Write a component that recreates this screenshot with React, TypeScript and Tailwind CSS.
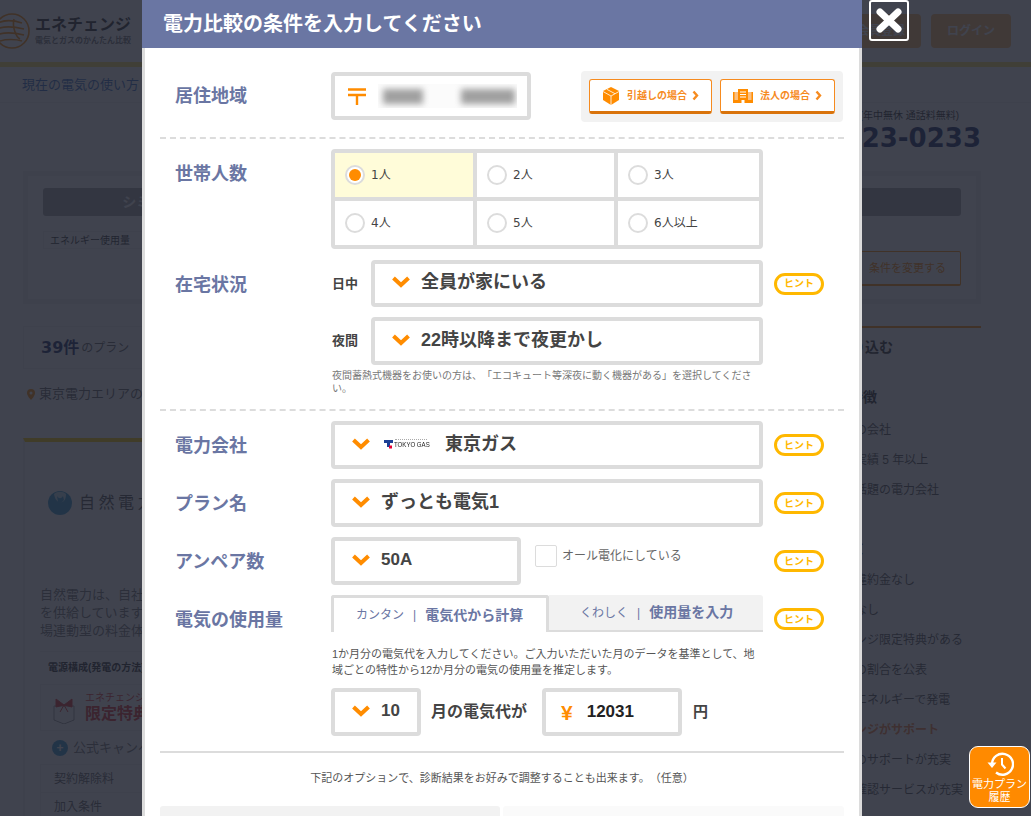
import type { ReactNode } from "react";

function Chevron() {
  return (
    <svg width="18" height="12" viewBox="0 0 18 12" className="-mt-px shrink-0">
      <polyline points="1.5,2 9,9 16.5,2" fill="none" stroke="#ff8c00" strokeWidth="4" />
    </svg>
  );
}

function SmallChevron() {
  return (
    <svg width="7" height="11" viewBox="0 0 7 11" className="shrink-0">
      <polyline points="1.5,1.5 5,5.5 1.5,9.5" fill="none" stroke="#f68b1f" strokeWidth="2.4" />
    </svg>
  );
}

function Label({ children }: { children: ReactNode }) {
  return <div className="w-[171px] shrink-0 pt-[2px] pl-[15px] text-[18px] leading-6 font-bold text-[#6a76a3]">{children}</div>;
}

function Hint({ className = "" }: { className?: string }) {
  return (
    <div className={`ml-[11px] flex h-[22px] w-[50px] shrink-0 items-center justify-center rounded-full border-[3px] border-[#ffb800] text-[10px] font-bold text-[#ffb800] ${className}`}>
      ヒント
    </div>
  );
}

function Select({ width, height = "h-12", children }: { width: string; height?: string; children: ReactNode }) {
  return (
    <div className={`flex ${width} ${height} shrink-0 items-center rounded-[4px] border-4 border-[#dcdcdc] bg-white pb-[2px] pl-[17px] text-[18px] font-bold text-[#444]`}>
      <Chevron />
      {children}
    </div>
  );
}

function Radio({ text, checked = false }: { text: string; checked?: boolean }) {
  return (
    <div className={`flex items-center pl-[10px] text-[12px] text-[#444] font-['DejaVu_Sans','Noto_Sans_CJK_JP',sans-serif] ${checked ? "bg-[#fffcd9]" : "bg-white"}`}>
      <span className="mr-[6px] flex h-5 w-5 items-center justify-center rounded-full border-2 border-[#dcdcdc] bg-white">
        {checked && <span className="h-3 w-3 rounded-full bg-[#ff8c00]" />}
      </span>
      {text}
    </div>
  );
}

function TokyoGasLogo() {
  return (
    <div className="ml-[14px] flex h-[10px] w-[45px] shrink-0 items-end">
      <svg width="9" height="9" viewBox="0 0 9 9" className="shrink-0">
        <polygon points="0,0 9,0 9,3 6,3 6,7 3,7 3,3 0,3" fill="#1c3f94" />
        <rect x="5" y="5.5" width="3" height="3" fill="#e60033" />
      </svg>
      <span className="relative ml-[1px] block w-[35px]">
        <span className="absolute -top-[2px] left-[1px] h-px w-[32px] border-t border-dotted border-[#aaa]" />
        <span className="block origin-left scale-x-[0.76] whitespace-nowrap text-[8px] leading-[8px] font-normal text-[#222] font-['Liberation_Sans',sans-serif]">TOKYO GAS</span>
      </span>
    </div>
  );
}

function SideItem({ children, accent = false }: { children: ReactNode; accent?: boolean }) {
  return <div className={`h-[30px] whitespace-nowrap text-[12px] leading-[30px] ${accent ? "font-bold text-[#f08040]" : "text-[#555]"}`}>{children}</div>;
}

function Background() {
  return (
    <div className="text-[#333]">
      {/* header */}
      <div className="flex h-[62px] items-center justify-between bg-white pr-5">
        <div className="flex items-center">
          <svg width="31" height="38" viewBox="0 0 31 38" className="mt-[2px] shrink-0">
            <g fill="none" stroke="#ff8c00" strokeWidth="1.6">
              <circle cx="12" cy="18" r="17" />
              <path d="M-2 10 C6 6 16 8 22 10 M-3 16 C6 12 16 14 24 16 M-3 22 C6 18 16 20 24 22 M0 28 C6 26 16 26 22 28" />
              <path d="M14 6 C12 14 16 24 20 26" />
            </g>
          </svg>
          <div className="ml-1">
            <div className="text-[16px] leading-5 font-bold">エネチェンジ</div>
            <div className="text-[8px] leading-3 font-bold text-[#777]">電気とガスのかんたん比較</div>
          </div>
        </div>
        <div className="flex gap-[10px]">
          <div className="flex h-[34px] w-20 items-center justify-center rounded-[4px] bg-[#ffb866] text-[12px] font-bold text-white">会員登録</div>
          <div className="flex h-[34px] w-20 items-center justify-center rounded-[4px] bg-[#ffb866] text-[12px] font-bold text-white">ログイン</div>
        </div>
      </div>
      <div className="h-[5px] bg-[#ffe066]" />
      <div className="flex h-[36px] items-center border-b border-[#eee] pl-[22px] text-[13px] text-[#3a6fc4]">現在の電気の使い方</div>

      {/* phone */}
      <div className="mr-[50px] flex h-[68px] flex-col items-end pt-[6px]">
        <div className="pr-[22px] text-[10px] leading-[14px]">電話受付 (年中無休 通話料無料)</div>
        <div className="-mt-[2px] text-[26px] leading-[34px] font-bold text-[#1a2a66] font-['DejaVu_Sans',sans-serif]">0120-123-0233</div>
      </div>

      {/* search summary card */}
      <div className="mx-[23px] mr-[50px] h-[133px] border-[5px] border-[#f2f2f2] bg-white px-[15px] pt-3">
        <div className="flex h-7 items-center justify-center rounded-[3px] bg-[#a8a8a8] pr-[648px] text-[14px] font-bold whitespace-nowrap text-white">シミュレーション</div>
        <div className="mt-[15px] flex h-[18px] w-[200px] items-center border border-[#eee] pl-[6px] text-[10px]">エネルギー使用量</div>
        <div className="mt-[2px] flex justify-end">
          <div className="flex h-[35px] w-[120px] items-center justify-end rounded-[2px] border border-b-2 border-[#ff8c00] pr-[14px] text-[11px] text-[#ff8c00]">条件を変更する</div>
        </div>
      </div>

      <div className="mt-[22px] mr-[50px] ml-[23px] flex">
        {/* plan list */}
        <div className="w-[750px] shrink-0">
          <div className="flex h-[43px] items-center border border-[#eee] pl-[17px]">
            <span className="text-[16px] font-bold font-['DejaVu_Sans','Noto_Sans_CJK_JP',sans-serif] text-[#1a2a66]">39件</span>
            <span className="ml-[2px] text-[12px] text-[#666]">のプラン</span>
          </div>
          <div className="mt-[16px] flex h-[18px] items-center pl-1 text-[13px] text-[#666]">
            <svg width="8" height="11" viewBox="0 0 8 11" className="mr-[4px]">
              <path d="M4 0a4 4 0 0 1 4 4c0 3-4 7-4 7S0 7 0 4a4 4 0 0 1 4-4z" fill="#ff8c00" />
              <circle cx="4" cy="4" r="1.5" fill="#fff" />
            </svg>
            東京電力エリアのプラン
          </div>
          <div className="mt-[35px] h-[400px] border-x-2 border-t-4 border-x-[#f2f2f2] border-t-[#ffd200] px-[15px]">
            <div className="mt-[49px] flex items-center pl-2">
              <svg width="24" height="24" viewBox="0 0 24 24" className="shrink-0">
                <circle cx="12" cy="12" r="12" fill="#3a9bd0" />
                <path d="M6 3c1 6 4 9 8 8 3-1 4-4 4-8-3-3-9-3-12 0z" fill="#bfe3f2" />
                <path d="M9 5c2 3 4 3 6 0l1 4-3 3-3-1z" fill="#3a9bd0" />
              </svg>
              <span className="ml-[7px] text-[16px] tracking-[3.5px] text-[#555]">自然電力</span>
            </div>
            <div className="mt-[71px] text-[13px] leading-[18px] text-[#777]">
              <div>自然電力は、自社グループ</div>
              <div>を供給しています。</div>
              <div>場連動型の料金体系</div>
            </div>
            <div className="mt-[11px] border-t border-[#eee] pt-2 pl-2 text-[10px] font-bold">電源構成(発電の方法)</div>
            <div className="mt-[9px] flex h-[47px] items-center border border-[#f2f2f2] pl-[10px]">
              <svg width="26" height="32" viewBox="0 0 26 32" fill="none" stroke="#d33" strokeWidth="1">
                <path d="M3 14h20v14l-10 4-10-4z" stroke="#999" />
                <path d="M13 13 5 7v8zM13 13l8-6v8zM13 13l-4 7M13 13l4 7" fill="#d33" />
              </svg>
              <div className="ml-2">
                <div className="text-[10px] leading-3 text-[#d33]">エネチェンジ</div>
                <div className="text-[16px] leading-5 font-bold text-[#d33]">限定特典</div>
              </div>
            </div>
            <div className="mt-[5px] flex h-6 items-center pl-[12px] text-[13px] text-[#777]">
              <span className="mr-[5px] flex h-4 w-4 items-center justify-center rounded-full bg-[#3a9bd0] text-[12px] leading-none font-bold text-white">+</span>
              公式キャンペーン
            </div>
            <div className="mt-[4px] flex h-[29px] items-center border border-[#eee] pl-[13px] text-[12px] text-[#666]">契約解除料</div>
            <div className="flex h-[29px] items-center border border-t-0 border-[#eee] pl-[13px] text-[12px] text-[#666]">加入条件</div>
          </div>
        </div>

        {/* filter column */}
        <div className="ml-[34px] flex-1">
          <div className="h-[2px] bg-[#ff8c00]" />
          <div className="mt-[9px] pl-[2px] text-[14px] leading-5 font-bold">条件絞り込む</div>
          <div className="mt-[30px] text-[14px] leading-5 font-bold">電力の特徴</div>
          <div className="mt-[8px]">
            <SideItem>地域密着の会社</SideItem>
            <SideItem>電力供給実績 5 年以上</SideItem>
            <SideItem>テレビで話題の電力会社</SideItem>
          </div>
          <div className="mt-[33px] text-[14px] leading-5 font-bold">プラン数</div>
          <div className="mt-[7px]">
            <SideItem>解約時の違約金なし</SideItem>
            <SideItem>基本料金なし</SideItem>
            <SideItem>エネチェンジ限定特典がある</SideItem>
            <SideItem>電源構成の割合を公表</SideItem>
            <SideItem>再生可能エネルギーで発電</SideItem>
            <SideItem accent>エネチェンジがサポート</SideItem>
            <SideItem>引越し時のサポートが充実</SideItem>
            <SideItem>請求額の確認サービスが充実</SideItem>
          </div>
        </div>
      </div>
    </div>
  );
}

function Modal() {
  return (
    <div className="absolute top-0 left-[142px] z-20 h-[816px] w-[720px] overflow-hidden bg-white">
      <div className="flex h-12 items-center pl-[21px] text-[20px] font-bold text-white bg-[#6a76a3]">電力比較の条件を入力してください</div>
      <div className="h-[768px] border-x-[3px] border-[#dcdcdc] px-[15px]">
        {/* area */}
        <div className="flex items-start pt-[23px]">
          <div className="pt-[11px]"><Label>居住地域</Label></div>
          <div className="mt-px flex h-12 w-[200px] items-center rounded-[4px] border-4 border-[#dcdcdc] pl-[13px]">
            <svg width="18" height="17" viewBox="0 0 18 17" className="shrink-0">
              <path d="M0 1.5h18M0 7h18M9 7v10" fill="none" stroke="#ff8c00" strokeWidth="2.4" />
            </svg>
            <div className="ml-[12px] flex h-6 w-[139px] items-center gap-[38px] overflow-hidden bg-[#fbfbfb] pl-[5px]">
              <div className="h-[15px] w-10 shrink-0 bg-[#a0a0a0] blur-[3px]" />
              <div className="h-[15px] w-[54px] shrink-0 bg-[#a0a0a0] blur-[3px]" />
            </div>
          </div>
          <div className="ml-[50px] flex h-[51px] w-[262px] items-start gap-2 rounded-[4px] bg-[#f2f2f2] px-2 pt-2">
            <div className="flex h-[35px] w-[123px] items-center rounded-[3px] border border-b-[3px] border-[#f68b1f] border-b-[#d9730b] bg-white pl-[12px] text-[10px] font-bold text-[#f68b1f]">
              <svg width="18" height="18" viewBox="0 0 18 18" className="mr-[7px] shrink-0">
                <polygon points="9,0 17,4 17,13 9,18 1,13 1,4" fill="#ff8c00" />
                <path d="M1 4.5 9 9l8-4.5M9 9v9M5 2.4l8 4.3" fill="none" stroke="#fff" strokeWidth="0.8" />
              </svg>
              引越しの場合
              <span className="ml-[5px]"><SmallChevron /></span>
            </div>
            <div className="flex h-[35px] w-[115px] items-center rounded-[3px] border border-b-[3px] border-[#f68b1f] border-b-[#d9730b] bg-white pl-[12px] text-[10px] font-bold text-[#f68b1f]">
              <svg width="20" height="14" viewBox="0 0 20 14" className="mr-[7px] shrink-0">
                <rect x="0" y="3" width="20" height="11" fill="#fbbf80" />
                <rect x="0" y="3" width="1.5" height="8" fill="#ff8c00" />
                <rect x="18.5" y="3" width="1.5" height="8" fill="#ff8c00" />
                <rect x="0" y="11" width="5" height="3" fill="#ff8c00" />
                <rect x="15" y="11" width="5" height="3" fill="#ff8c00" />
                <rect x="5" y="0" width="10" height="14" fill="#ff8c00" />
                <path d="M7 3h6M7 5.5h6M7 8h6" stroke="#fff" strokeWidth="1" />
                <rect x="8.5" y="11" width="3" height="3" fill="#fff" />
              </svg>
              法人の場合
              <span className="ml-[5px]"><SmallChevron /></span>
            </div>
          </div>
        </div>
        <div className="mt-[15px] border-t-2 border-dashed border-[#dcdcdc]" />

        {/* household */}
        <div className="mt-[10px] flex">
          <div className="pt-[11px]"><Label>世帯人数</Label></div>
          <div className="grid h-[100px] w-[432px] grid-cols-[138px_137px_141px] grid-rows-2 gap-1 rounded-[4px] border-4 border-[#dcdcdc] bg-[#dcdcdc]">
            <Radio text="1人" checked />
            <Radio text="2人" />
            <Radio text="3人" />
            <Radio text="4人" />
            <Radio text="5人" />
            <Radio text="6人以上" />
          </div>
        </div>

        {/* at home */}
        <div className="mt-[11px] flex">
          <div className="pt-[11px]"><Label>在宅状況</Label></div>
          <div>
            <div className="flex items-center">
              <div className="w-10 pl-[1px] text-[13px] font-bold text-[#444]">日中</div>
              <Select width="w-[392px]" height="h-[47px]"><span className="ml-[11px]">全員が家にいる</span></Select>
              <Hint />
            </div>
            <div className="mt-[10px] flex items-center">
              <div className="w-10 pl-[1px] text-[13px] font-bold text-[#444]">夜間</div>
              <Select width="w-[392px]"><span className="ml-[11px]">22時以降まで夜更かし</span></Select>
            </div>
            <div className="mt-[4px] ml-[1px] w-[425px] text-[10px] leading-[13px] text-[#777]">
              夜間蓄熱式機器をお使いの方は、「エコキュート等深夜に動く機器がある」を選択してください。
            </div>
          </div>
        </div>
        <div className="mt-[14px] border-t-2 border-dashed border-[#dcdcdc]" />

        {/* current plan */}
        <div className="mt-[10px] flex items-center">
          <Label>電力会社</Label>
          <Select width="w-[432px]">
            <TokyoGasLogo />
            <span className="ml-[16px]">東京ガス</span>
          </Select>
          <Hint />
        </div>
        <div className="mt-[10px] flex items-center">
          <Label>プラン名</Label>
          <Select width="w-[432px]"><span className="ml-[11px]">ずっとも電気1</span></Select>
          <Hint />
        </div>
        <div className="mt-[10px] flex items-center">
          <Label>アンペア数</Label>
          <Select width="w-[190px]"><span className="ml-[11px] text-[17px]">50A</span></Select>
          <div className="flex w-[242px] shrink-0 items-center self-start pt-[8px] pl-[14px]">
            <span className="h-[22px] w-[22px] rounded-[2px] border border-[#dcdcdc]" />
            <span className="ml-[5px] text-[12px] text-[#666]">オール電化にしている</span>
          </div>
          <Hint />
        </div>

        {/* usage */}
        <div className="mt-[10px] flex">
          <div className="pt-[11px]"><Label>電気の使用量</Label></div>
          <div className="w-[432px] shrink-0">
            <div className="flex h-[37px] text-[#6a76a3]">
              <div className="flex w-[218px] items-center rounded-t-[3px] border-x-[3px] border-t-[3px] border-[#dcdcdc] pl-[22px]">
                <span className="text-[12px]">カンタン</span>
                <span className="mx-[9px] text-[12px]">|</span>
                <span className="text-[14px] font-bold">電気代から計算</span>
              </div>
              <div className="flex w-[214px] items-center rounded-tr-[3px] border-b-2 border-[#dcdcdc] bg-[#f2f2f2] pl-[31px]">
                <span className="text-[12px]">くわしく</span>
                <span className="mx-[9px] text-[12px]">|</span>
                <span className="text-[14px] font-bold">使用量を入力</span>
              </div>
            </div>
            <div className="mt-[14px] ml-[1px] w-[428px] text-[11px] leading-4 text-[#555]">
              1か月分の電気代を入力してください。ご入力いただいた月のデータを基準として、地域ごとの特性から12か月分の電気の使用量を推定します。
            </div>
            <div className="mt-[10px] flex items-center">
              <Select width="w-[90px]"><span className="ml-[11px] text-[17px]">10</span></Select>
              <span className="ml-[10px] text-[16px] font-bold text-[#444]">月の電気代が</span>
              <div className="ml-[15px] flex h-12 w-[140px] items-center rounded-[4px] border-4 border-[#dcdcdc] pl-[15px]">
                <span className="text-[21px] leading-none font-bold text-[#ff8c00]">¥</span>
                <span className="ml-[14px] text-[17px] font-bold text-[#222]">12031</span>
              </div>
              <span className="ml-[11px] text-[15px] font-bold text-[#444]">円</span>
            </div>
          </div>
          <Hint className="mt-[13px]" />
        </div>

        <div className="mt-[15px] h-[2px] bg-[#dcdcdc]" />
        <div className="mt-[17px] text-center text-[11px] leading-4 text-[#555]">下記のオプションで、診断結果をお好みで調整することも出来ます。（任意）</div>
        <div className="mt-5 flex h-12 gap-[3px]">
          <div className="w-[340px] rounded-t-[3px] bg-[#f2f2f2]" />
          <div className="flex-1 rounded-t-[3px] bg-[#fafafa]" />
        </div>
      </div>
    </div>
  );
}

export default function App() {
  return (
    <div className="relative h-[816px] w-[1031px] overflow-hidden bg-white [text-spacing-trim:space-all] font-['Liberation_Sans','Noto_Sans_CJK_JP',sans-serif]">
      <Background />
      <div className="absolute inset-0 z-10 bg-[#1e222f]/85" />
      <Modal />

      {/* close button */}
      <div className="absolute top-0 left-[869px] z-30 flex h-[41px] w-10 items-center justify-center rounded-[3px] border-2 border-white">
        <svg width="26" height="25" viewBox="0 0 26 25">
          <path d="M4 4 22 21M22 4 4 21" stroke="#fff" strokeWidth="7" strokeLinecap="round" />
        </svg>
      </div>

      {/* plan history */}
      <div className="absolute top-[746px] left-[969px] z-30 flex h-[62px] w-[61px] flex-col items-center rounded-[9px] border border-white bg-[#ff8a00] pt-[5px] text-white">
        <svg width="28" height="24" viewBox="0 0 28 24" className="shrink-0">
          <path d="M6 12A10.5 10.5 0 1 1 10 20.5" fill="none" stroke="#fff" strokeWidth="2.4" />
          <polygon points="1.5,10.5 10.5,10.5 6,16" fill="#fff" />
          <path d="M16 6v6.5l3.5 4" fill="none" stroke="#fff" strokeWidth="2" />
        </svg>
        <div className="mt-[1px] text-[11px] leading-[14px] whitespace-nowrap">電力プラン</div>
        <div className="text-[11px] leading-[13px]">履歴</div>
      </div>
    </div>
  );
}
